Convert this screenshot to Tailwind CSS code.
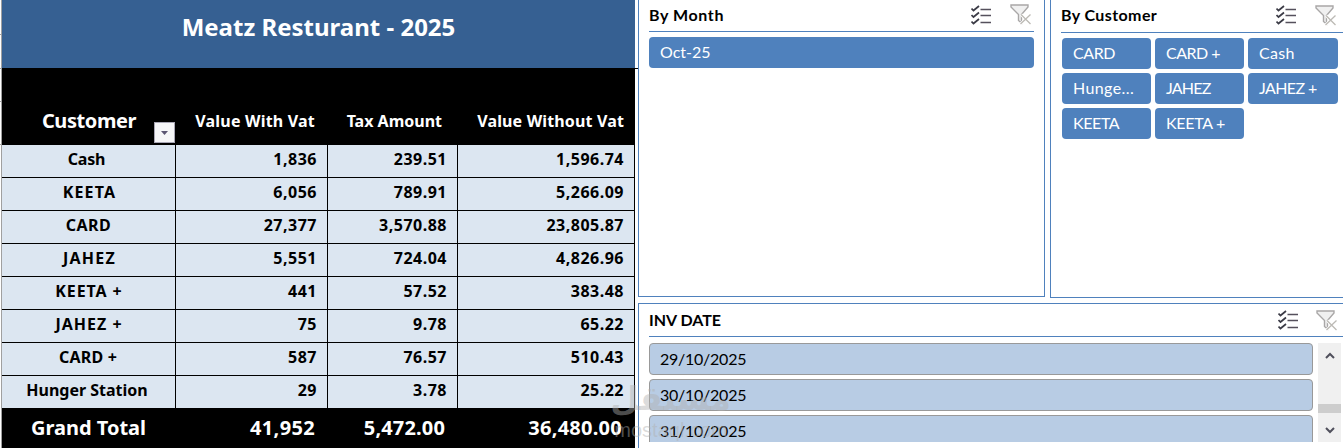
<!DOCTYPE html>
<html lang="en">
<head>
    <meta charset="UTF-8">
    <meta name="viewport" content="width=device-width, initial-scale=1.0">
    <title>Meatz Resturant - 2025</title>
    <script src="https://cdn.jsdelivr.net/npm/@tailwindcss/browser@4"></script>
</head>
<body class="bg-white">
    <svg class="hidden">
        <symbol id="multi" viewBox="0 0 20 20">
            <path d="M0.500 3.500l2 2L8 1M0.500 10l2 2L8 7.500M0.500 16.500l2 2L8 14" fill="none" stroke="#3b3b46" stroke-width="1.700"/>
            <path d="M9.500 4.500H20M9.500 10.500H20M9.500 17.500H20" fill="none" stroke="#55505c" stroke-width="1.300"/>
        </symbol>
        <symbol id="clear" viewBox="0 0 21 21">
            <path d="M1 1h17v2l-6.500 7.500v8.500l-3-2.500v-6L1 3z" fill="#f0f0f0" stroke="#a9a7a7" stroke-width="1.400"/>
            <path d="M11 10.500l9.500 9.500M20.500 10.500L10.500 20" fill="none" stroke="#fff" stroke-width="3"/>
            <path d="M11 10.500l9.500 9.500M20.500 10.500L10.500 20" fill="none" stroke="#bcbab5" stroke-width="1.300"/>
        </symbol>
    </svg>

    <div class="relative flex h-[448px] w-[1343px] overflow-hidden">
        <!-- Sheet edge -->
        <div class="flex w-[2px] shrink-0 flex-col border-r border-[#a0a0a0] pt-[34px]">
            <div class="h-[34px] border-t border-[#a0a0a0]"></div>
            <div class="h-[33px] border-t border-[#a0a0a0]"></div>
            <div class="h-[43px] border-t border-[#a0a0a0]"></div>
            <div class="h-[33px] border-t border-[#a0a0a0]"></div>
        </div>

        <!-- Pivot table -->
        <div class="flex w-[633px] shrink-0 flex-col font-['Noto_Sans','Open_Sans',sans-serif] font-bold text-black">
            <div class="flex h-[68px] shrink-0 justify-center bg-[#366092] pt-[9px] text-[24px] leading-9 text-white">Meatz Resturant - 2025</div>
            <div class="grid h-[77px] shrink-0 grid-cols-[174px_152px_130px_177px] items-end bg-black pb-[12px] text-[16px] leading-6 whitespace-nowrap text-white">
                <div class="relative text-center text-[20px] tracking-[-0.4px]">Customer
                    <span class="absolute top-[13px] right-[1px] flex h-[21px] w-[21px] items-center justify-center border border-[#a9a7b5] bg-[#f6f6f8]">
                        <svg class="h-[4px] w-[7px]" viewBox="0 0 7 4"><path d="M0 0h7L3.500 4z" fill="#5c5673"/></svg>
                    </span>
                </div>
                <div class="pr-[13px] text-right tracking-[0.2px]">Value With Vat</div>
                <div class="pr-[16px] text-right">Tax Amount</div>
                <div class="pr-[11px] text-right tracking-[0.15px]">Value Without Vat</div>
            </div>
            <div id="rows" class="shrink-0"></div>
            <div class="grid h-[40px] shrink-0 grid-cols-[174px_152px_130px_177px] bg-black text-[20px] leading-[38px] text-white">
                <div class="pr-[1px] text-center">Grand Total</div>
                <div class="pr-[13px] text-right tracking-[0.35px]">41,952</div>
                <div class="pr-[13px] text-right tracking-[0.15px]">5,472.00</div>
                <div class="pr-[13px] text-right tracking-[0.25px]">36,480.00</div>
            </div>
        </div>

        <!-- Slicers -->
        <div class="flex grow flex-col font-[Lato,sans-serif] text-[16px]">
            <div class="flex h-[298px] shrink-0">
                <div class="w-[3px] pt-[68px]"><div class="h-px bg-black"></div></div>
                <div class="h-[297px] w-[407px] border-x border-b border-[#4f81bd] px-[10px]">
                    <div class="flex h-[32px] items-center border-b border-[#4f81bd] pb-[2px]">
                        <span class="grow font-bold tracking-[0.6px]">By Month</span>
                        <svg class="mr-[19px] h-5 w-5"><use href="#multi"/></svg>
                        <svg class="mr-[3px] h-[21px] w-[21px]"><use href="#clear"/></svg>
                    </div>
                    <div class="mt-[5px] h-[31px] rounded bg-[#4f81bd] pl-[11px] leading-[30px] text-white">Oct-25</div>
                </div>
                <div class="ml-[5px] grow border-b border-l border-[#4f81bd] pl-[10px]">
                    <div class="flex h-[33px] items-center border-b border-[#4f81bd] pb-[2px]">
                        <span class="grow font-bold tracking-[0.4px]">By Customer</span>
                        <svg class="mr-[19px] h-5 w-5"><use href="#multi"/></svg>
                        <svg class="mr-[7px] h-[21px] w-[21px]"><use href="#clear"/></svg>
                    </div>
                    <div id="customers" class="mt-[5px] ml-[1px] grid grid-cols-[89px_89px_90px] gap-1"></div>
                </div>
            </div>
            <div class="mt-[5px] ml-[3px] grow border-t border-l border-[#4f81bd] pl-[10px]">
                <div class="flex h-[33px] items-center border-b border-[#4f81bd]">
                    <span class="grow font-bold">INV DATE</span>
                    <svg class="mr-[18px] h-5 w-5"><use href="#multi"/></svg>
                    <svg class="mr-[6px] h-[21px] w-[21px]"><use href="#clear"/></svg>
                </div>
                <div class="mt-[6px] flex h-[99px] gap-[5px] overflow-hidden">
                    <div id="dates" class="flex w-[664px] flex-col gap-1"></div>
                    <div class="flex w-[23px] flex-col items-center bg-[#f0f0f0]">
                        <svg class="mt-[9px] h-[7px] w-[10px]" viewBox="0 0 10 7"><path d="M1 6l4-4 4 4" fill="none" stroke="#50505c" stroke-width="2"/></svg>
                        <div class="mt-[45px] h-[9px] w-[23px] bg-[#cdcdcd]"></div>
                        <svg class="mt-[14px] h-[7px] w-[10px]" viewBox="0 0 10 7"><path d="M1 1l4 4 4-4" fill="none" stroke="#50505c" stroke-width="2"/></svg>
                    </div>
                </div>
            </div>
        </div>

        <!-- Watermark -->
        <div class="pointer-events-none absolute top-[376px] left-[611px] w-[120px] text-center text-[#b0b0b0]/45">
            <div dir="rtl" class="h-[43px] font-['DejaVu_Sans',sans-serif] text-[33px] leading-[46px] font-bold">مستقل</div>
            <div class="font-['Liberation_Sans',sans-serif] text-[20px] leading-[22px]">mostaql.com</div>
        </div>
    </div>

    <script>
        const rows = [
            ["Cash", "1,836", "239.51", "1,596.74", "pr-[4px] tracking-[-0.2px]"],
            ["KEETA", "6,056", "789.91", "5,266.09", "pl-[2px] tracking-[1.2px]"],
            ["CARD", "27,377", "3,570.88", "23,805.87", "tracking-[0.5px]"],
            ["JAHEZ", "5,551", "724.04", "4,826.96", "pl-[2px] tracking-[1.2px]"],
            ["KEETA +", "441", "57.52", "383.48", "pl-[1px] tracking-[0.9px]"],
            ["JAHEZ +", "75", "9.78", "65.22", "pl-[1px] tracking-[1px]"],
            ["CARD +", "587", "76.57", "510.43", "pr-[1px] tracking-[0.2px]"],
            ["Hunger Station", "29", "3.78", "25.22", "pr-[3px] tracking-normal"]
        ];
        document.getElementById("rows").innerHTML = rows.map(r => `
            <div class="grid h-[33px] grid-cols-[174px_152px_130px_177px] border-b border-black bg-[#dce6f1] text-[16px] leading-[29px]">
                <div class="border-r border-black text-center ${r[4]}">${r[0]}</div>
                <div class="border-r border-black pr-[10px] text-right tracking-[0.5px]">${r[1]}</div>
                <div class="border-r border-black pr-[10px] text-right tracking-[0.5px]">${r[2]}</div>
                <div class="border-r border-black pr-[10px] text-right tracking-[0.5px]">${r[3]}</div>
            </div>`).join("");

        const customers = [
            ["CARD", "tracking-[-0.4px]"],
            ["CARD +", "tracking-[-0.5px]"],
            ["Cash", "tracking-[0.3px]"],
            ["Hunge...", "tracking-[0.4px]"],
            ["JAHEZ", "tracking-[-0.8px]"],
            ["JAHEZ +", "tracking-[-0.6px]"],
            ["KEETA", "tracking-[-0.4px]"],
            ["KEETA +", "tracking-[-0.3px]"]
        ];
        document.getElementById("customers").innerHTML = customers.map(c =>
            `<div class="h-[31px] rounded bg-[#4f81bd] pl-[11px] leading-[30px] text-white ${c[1]}">${c[0]}</div>`).join("");

        const dates = ["29/10/2025", "30/10/2025", "31/10/2025"];
        document.getElementById("dates").innerHTML = dates.map(d =>
            `<div class="h-[32px] shrink-0 rounded border border-[#999] bg-[#b8cce4] pl-[10px] leading-[29px] tracking-[-0.25px] text-black">${d}</div>`).join("");
    </script>
</body>
</html>
